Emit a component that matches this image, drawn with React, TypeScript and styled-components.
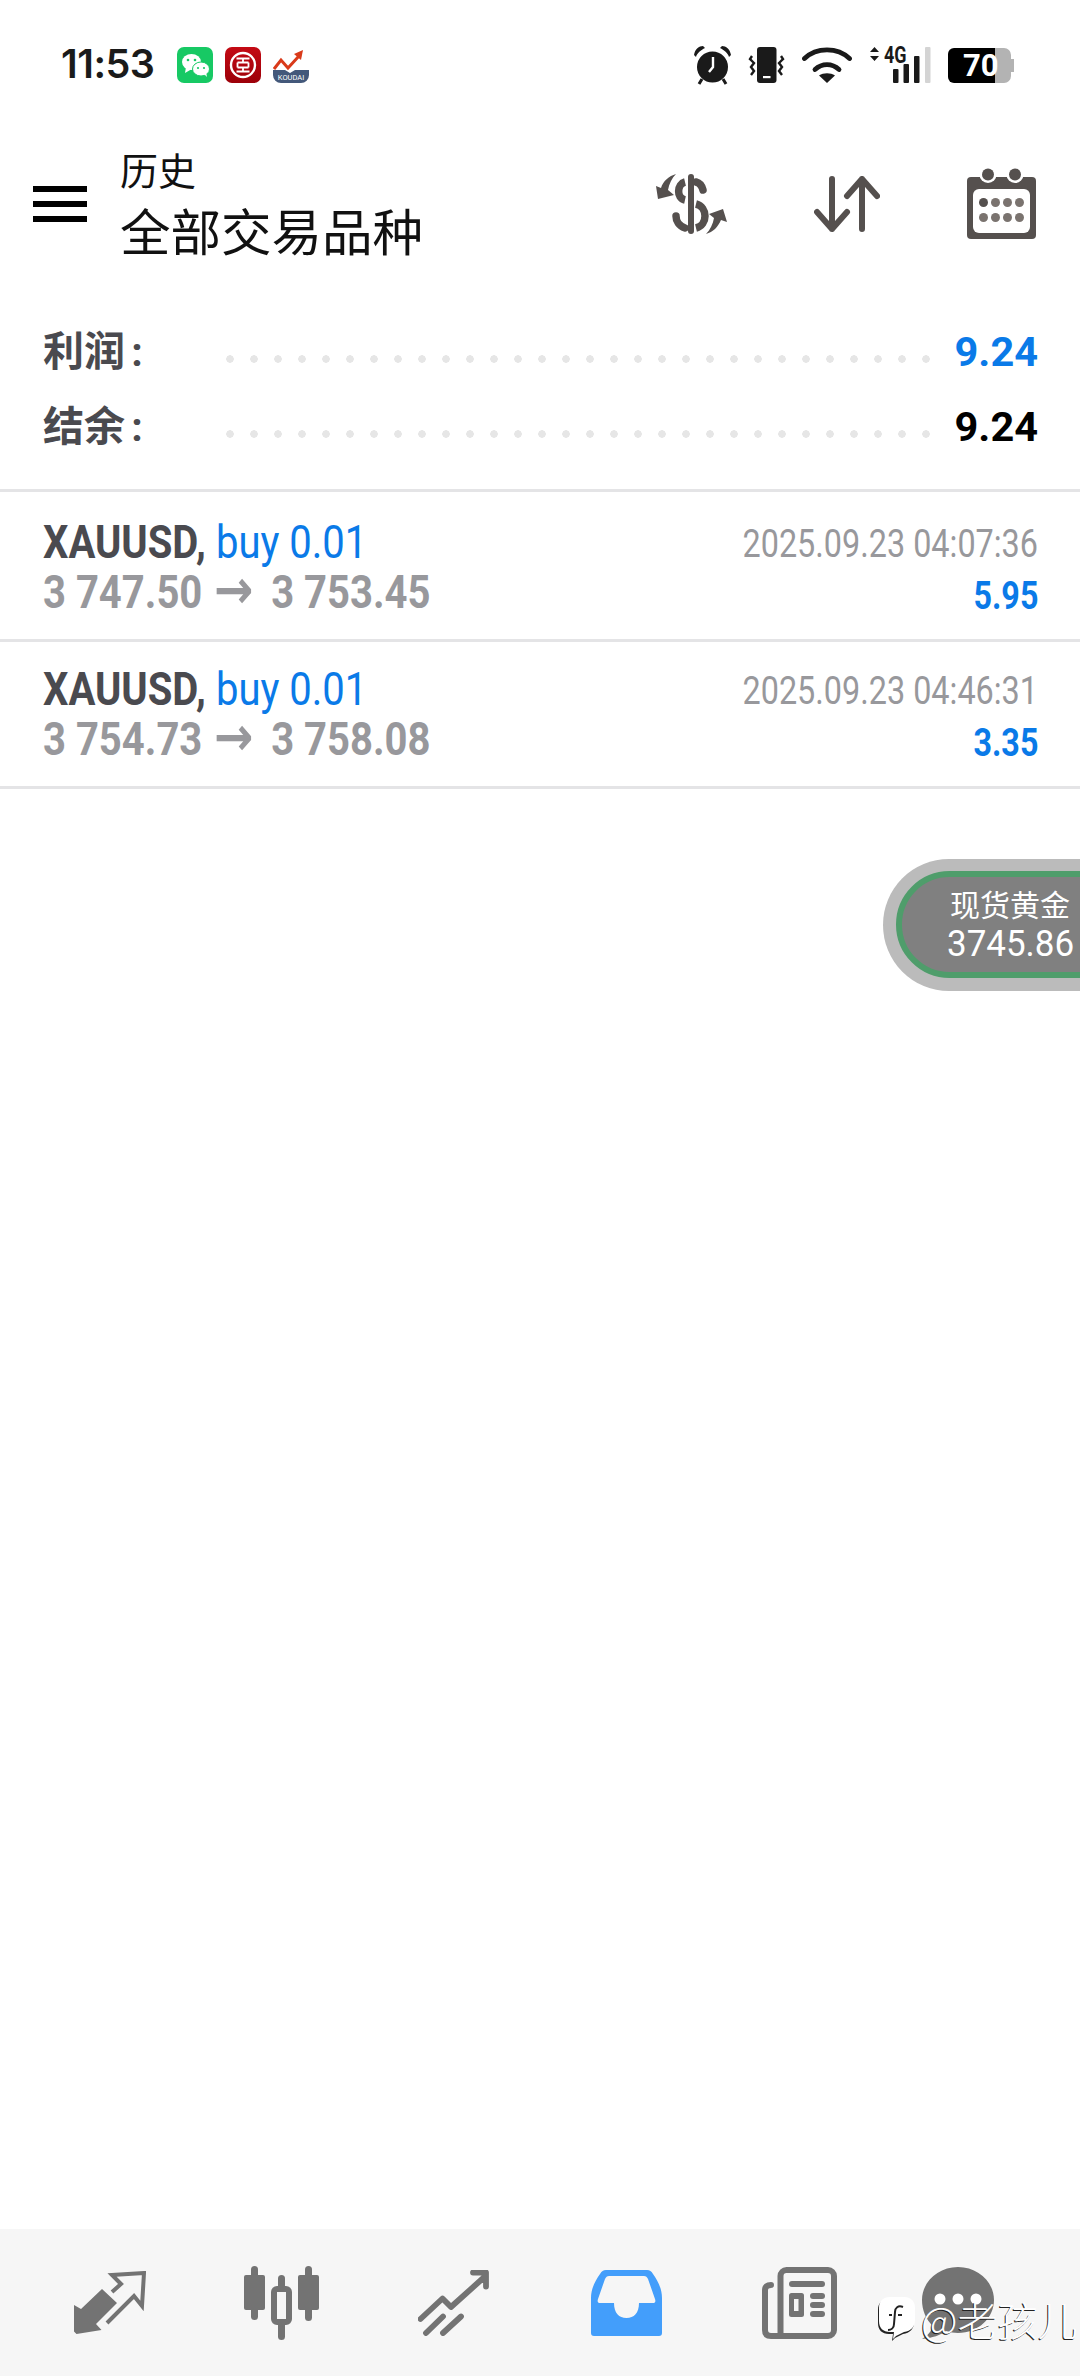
import React from "react";
import styled, { createGlobalStyle } from "styled-components";

const GlobalStyle = createGlobalStyle`
  html, body {
    margin: 0;
    padding: 0;
    background: #fff;
  }
  * {
    box-sizing: border-box;
  }
`;

const cjk = `"Noto Sans CJK SC", sans-serif`;
const blue = "#0a7ae8";
const grey = "#98989c";
const ink = "#4a4a4f";
const ink2 = "#55504e";
const tab = "#737373";
const dark = "#1a1a1a";

const Page = styled.div`
  width: 1080px;
  height: 2376px;
  display: flex;
  flex-direction: column;
  background: #fff;
  overflow: hidden;
  position: relative;
  font-family: Roboto, ${cjk};
`;

const StatusBar = styled.div`
  height: 127px;
  flex: none;
  display: flex;
  align-items: flex-start;
  padding: 47px 66px 0 61px;
`;

const Clock = styled.div`
  font: 600 39.5px/40px Inter, sans-serif;
  color: ${dark};
  width: 116px;
  margin-top: -3px;
  letter-spacing: -0.5px;
`;

const AppIcons = styled.div`
  display: flex;
  gap: 12px;
`;

const StatusIcons = styled.div`
  margin-left: auto;
  display: flex;
  align-items: flex-start;
  gap: 17px;
`;

const Header = styled.div`
  height: 161px;
  flex: none;
  display: flex;
  align-items: center;
  padding: 0 44px 0 33px;
`;

const MenuButton = styled.div`
  width: 54px;
  height: 36px;
  margin: 0 33px 7px 0;
  border-top: 6px solid #000;
  border-bottom: 6px solid #000;
  display: flex;
  align-items: center;
  &::before {
    content: "";
    display: block;
    width: 100%;
    height: 6px;
    background: #000;
  }
`;

const TitleBlock = styled.div`
  display: flex;
  flex-direction: column;
  color: #111;
  font-family: ${cjk};
  margin-bottom: 6px;
`;

const Subtitle = styled.div`
  font-size: 38px;
  line-height: 48px;
  font-weight: 400;
`;

const Title = styled.div`
  font-size: 50.5px;
  line-height: 72px;
  font-weight: 400;
`;

const HeaderActions = styled.div`
  margin: 0 0 8px auto;
  display: flex;
  align-items: center;
  gap: 87px;
`;

const Summary = styled.div`
  flex: none;
  height: 201px;
  padding: 26px 42px 0 43px;
  display: flex;
  flex-direction: column;
`;

const SummaryRow = styled.div`
  height: 75px;
  display: flex;
  align-items: center;
`;

const SummaryLabel = styled.div`
  width: 183px;
  font: 700 41px/48px Roboto, ${cjk};
  word-spacing: -4px;
  color: ${ink};
  flex: none;
`;

const Leader = styled.div`
  flex: 1;
  height: 8px;
  margin: 15px 11px 0 0;
  background-image: radial-gradient(circle at 4px 4px, #e6e6e6 3.5px, transparent 4px);
  background-size: 24px 8px;
`;

const SummaryValue = styled.div<{ $color: string }>`
  font: 700 41.5px/48px Roboto, sans-serif;
  color: ${(p) => p.$color};
`;

const Deal = styled.div<{ $first: boolean }>`
  flex: none;
  height: ${(p) => (p.$first ? 150 : 147)}px;
  border-top: 3px solid #e4e4e6;
  padding: ${(p) => (p.$first ? 25 : 22)}px 42px 0 43px;
  display: flex;
  justify-content: space-between;
`;

const Column = styled.div<{ $end?: boolean }>`
  display: flex;
  flex-direction: column;
  align-items: ${(p) => (p.$end ? "flex-end" : "flex-start")};
  margin-top: ${(p) => (p.$end ? "1px" : "0")};
`;

const Narrow = styled.div<{ $origin: string }>`
  transform: scaleX(0.87);
  transform-origin: ${(p) => p.$origin};
  white-space: pre;
`;

const Symbol = styled(Narrow)`
  font-size: 46px;
  line-height: 50px;
  font-weight: 700;
  color: ${ink};
`;

const Side = styled.span`
  font-weight: 400;
  color: ${blue};
`;

const Prices = styled(Narrow)`
  font-size: 46px;
  line-height: 50px;
  font-weight: 700;
  color: ${grey};
`;

const ArrowGlyph = styled.span`
  display: inline-block;
  font-family: "DejaVu Sans", sans-serif;
  font-size: 54px;
  line-height: 44px;
  height: 44px;
  padding: 0 9px 0 2px;
`;

const Stamp = styled(Narrow)`
  font-size: 39px;
  line-height: 52px;
  color: ${grey};
  transform: scaleX(0.83);
`;

const Profit = styled(Narrow)`
  font-size: 38px;
  line-height: 52px;
  font-weight: 700;
  color: ${blue};
  transform: scaleX(0.85);
`;

const LastLine = styled.div`
  border-top: 3px solid #e4e4e6;
`;

const Quote = styled.div`
  position: absolute;
  left: 883px;
  top: 859px;
  width: 260px;
  height: 132px;
  border-radius: 66px;
  background: #bbb;
  padding: 12px 0 0 13px;
`;

const QuoteInner = styled.div`
  width: 240px;
  height: 107px;
  border-radius: 54px;
  background: #808080;
  border: 6px solid #4f9d6b;
  color: #fff;
  font-family: Roboto, ${cjk};
  padding: 10px 0 0 45px;
`;

const QuoteName = styled.div`
  font-size: 30px;
  line-height: 38px;
  font-weight: 400;
  padding-left: 3px;
`;

const QuotePrice = styled.div`
  font-size: 37px;
  line-height: 38px;
  transform: scaleX(0.945);
  transform-origin: 0 50%;
`;

const Spacer = styled.div`
  flex: 1;
`;

const TabBar = styled.div`
  height: 147px;
  flex: none;
  background: #f6f6f6;
  display: flex;
  align-items: center;
  padding: 0 0 0 74px;
`;

const Tab = styled.div<{ $gap: number }>`
  display: flex;
  margin-right: ${(p) => p.$gap}px;
`;

const Watermark = styled.div`
  position: absolute;
  left: 877px;
  top: 2296px;
  display: flex;
  align-items: center;
  color: #fff;
  font: 300 40px/44px ${cjk};
  text-shadow: -1px 1px 0 #222;
  gap: 5px;
`;

const WatermarkMark = styled.svg`
  flex: none;
`;

const AlarmIcon = styled.svg`
  margin-top: -2px;
`;

function WeChat() {
  return (
    <svg width="36" height="36" viewBox="0 0 36 36">
      <rect width="36" height="36" rx="7" fill="#17c964" />
      <ellipse cx="14.500" cy="15" rx="9.500" ry="8" fill="#fff" />
      <path d="M9 20l-1 6 6-3.500z" fill="#fff" />
      <ellipse cx="24" cy="22" rx="8.500" ry="7" fill="#fff" stroke="#17c964" strokeWidth="1" />
      <path d="M27 27l3 3-1-5z" fill="#fff" />
      <circle cx="11" cy="13" r="1.300" fill="#17c964" />
      <circle cx="18" cy="13" r="1.300" fill="#17c964" />
      <circle cx="21" cy="21" r="1.100" fill="#17c964" />
      <circle cx="27" cy="21" r="1.100" fill="#17c964" />
    </svg>
  );
}

function Bank() {
  return (
    <svg width="36" height="36" viewBox="0 0 36 36">
      <defs>
        <linearGradient id="bankFill" x1="0" y1="0" x2="0" y2="1">
          <stop offset="0" stopColor="#c40a14" />
          <stop offset="1" stopColor="#9c0009" />
        </linearGradient>
      </defs>
      <rect width="36" height="36" rx="7" fill="url(#bankFill)" />
      <circle cx="18" cy="18" r="12" fill="none" stroke="#fff" strokeWidth="2.400" />
      <path d="M11.500 11.500h13M18 11.500v4M12.500 15.500h11M12.500 15.500v5M23.500 15.500v5M12.500 20.500h11M18 20.500v4M11.500 24.500h13" stroke="#fff" strokeWidth="1.800" fill="none" />
    </svg>
  );
}

function Koudai() {
  return (
    <svg width="36" height="36" viewBox="0 0 36 36">
      <path d="M0 23h12l5 3 5-3h14v5a8 8 0 0 1-8 8H8a8 8 0 0 1-8-8z" fill="#43587a" />
      <path d="M1 22l7-9 7 8L26 9" fill="none" stroke="#d93a1a" strokeWidth="3" />
      <path d="M21 7l9-4-2 10z" fill="#d93a1a" />
      <text x="18" y="33" fontSize="7.500" fill="#fff" textAnchor="middle" fontFamily="Roboto, sans-serif">KOUDAI</text>
    </svg>
  );
}

function Alarm() {
  return (
    <AlarmIcon width="37" height="40" viewBox="0 0 37 40">
      <circle cx="18.500" cy="22" r="15.500" fill={dark} />
      <path d="M0 10C1 4 5 1 9 1L11 3C7 5 3 8 2 12zM37 10C36 4 32 1 28 1L26 3C30 5 34 8 35 12z" fill={dark} />
      <path d="M8 34l-3 5M29 34l3 5" stroke={dark} strokeWidth="3" />
      <path d="M19 12v10l-4 5" fill="none" stroke="#fff" strokeWidth="2.400" />
    </AlarmIcon>
  );
}

function Vibrate() {
  return (
    <svg width="37" height="38" viewBox="0 0 37 38">
      <rect x="9" y="0" width="19.500" height="36" rx="3" fill={dark} />
      <rect x="15" y="29" width="7.500" height="2.200" fill="#fff" />
      <path d="M4 9l-2 3 4 4-3 4 3 4-3 4M33 9l2 3-4 4 3 4-3 4 3 4" fill="none" stroke={dark} strokeWidth="2.400" />
    </svg>
  );
}

function Wifi() {
  return (
    <svg width="50" height="37" viewBox="0 0 50 37">
      <path d="M2.500 11.500c12-11.500 33-11.500 45 0" fill="none" stroke={dark} strokeWidth="4.800" strokeLinecap="round" />
      <path d="M13 22.500c7-6.500 17-6.500 24 0" fill="none" stroke={dark} strokeWidth="4.800" strokeLinecap="round" />
      <path d="M25 36l-8-7.500c4.500-3 11.500-3 16 0z" fill={dark} />
    </svg>
  );
}

const SignalWrap = styled.div`
  position: relative;
  width: 62px;
  height: 37px;
`;

const SignalText = styled.span`
  position: absolute;
  left: 15px;
  top: -3px;
  font: 700 23px/24px Roboto, sans-serif;
  color: ${dark};
  transform: scaleX(0.78);
  transform-origin: 0 50%;
`;

function Signal() {
  return (
    <SignalWrap>
      <svg width="62" height="37" viewBox="0 0 62 37">
        <path d="M5.500 0l4.500 5H1zM5.500 14l4.500-5H1z" fill={dark} />
        <rect x="24" y="22" width="5.500" height="14" rx="1" fill={dark} />
        <rect x="34.500" y="17" width="5.500" height="19" rx="1" fill={dark} />
        <rect x="45" y="9" width="5.500" height="27" rx="1" fill={dark} />
        <rect x="56" y="0" width="5.500" height="36" rx="1" fill="#d4d4d4" />
      </svg>
      <SignalText>4G</SignalText>
    </SignalWrap>
  );
}

const BatteryBody = styled.div`
  position: relative;
  width: 66px;
  height: 35px;
  margin-top: 1px;
`;

const BatteryLabel = styled.span`
  position: absolute;
  left: 15px;
  top: 0;
  font: 700 31px/35px Roboto, sans-serif;
  color: #fff;
`;

function Battery() {
  return (
    <BatteryBody>
      <svg width="66" height="35" viewBox="0 0 66 35">
        <path d="M47 0h9a7 7 0 0 1 7 7v4h3v13h-3v4a7 7 0 0 1-7 7H47z" fill="#b3b3b3" />
        <path d="M6 0h41v35H6a6 6 0 0 1-6-6V6a6 6 0 0 1 6-6z" fill="#000" />
      </svg>
      <BatteryLabel>70</BatteryLabel>
    </BatteryBody>
  );
}

function DollarSwap() {
  return (
    <svg width="72" height="62" viewBox="0 0 72 62">
      <rect x="33" y="1" width="6" height="60" rx="3" fill={ink2} />
      <g fill="none" stroke={ink2} strokeWidth="7.500">
        <path d="M30 9C22 11 21 25 30 27" />
        <path d="M41 9C45 10 47 13 48 17" strokeLinecap="round" />
        <path d="M41 31C53 34 53 52 41 55" />
        <path d="M21 43C21 48 24 53 30 55" strokeLinecap="round" />
      </g>
      <path d="M21 1C14 3 8 8 6 15L1 13L3 26L19 22L13 17C14 11 17 5 21 1Z" fill={ink2} />
      <path d="M51 61C58 59 63 54 66 47L72 49L68 36L54 41L59 45C58 51 55 57 51 61Z" fill={ink2} />
    </svg>
  );
}

function SortArrows() {
  return (
    <svg width="66" height="56" viewBox="0 0 66 56">
      <path d="M18 3v50M3 36l15 17 15-17M48 53V3M33 20L48 3l15 17" fill="none" stroke={ink2} strokeWidth="6" strokeLinecap="round" strokeLinejoin="round" />
    </svg>
  );
}

function Calendar() {
  return (
    <svg width="69" height="71" viewBox="0 0 69 71">
      <path d="M4 9h61a4 4 0 0 1 4 4v54a4 4 0 0 1-4 4H4a4 4 0 0 1-4-4V13a4 4 0 0 1 4-4z" fill={ink2} />
      <circle cx="21" cy="6.500" r="8.500" fill="#fff" />
      <circle cx="48" cy="6.500" r="8.500" fill="#fff" />
      <circle cx="21" cy="6.500" r="6" fill={ink2} />
      <circle cx="48" cy="6.500" r="6" fill={ink2} />
      <rect x="6" y="21" width="57" height="44" rx="6" fill="#fff" />
      {[16.500, 28.500, 40.500, 52.500].map((x, i) => (
        <React.Fragment key={x}>
          <circle cx={x} cy="34.500" r="4.500" fill={i === 0 ? ink2 : "#7a736f"} />
          <circle cx={x} cy="49.500" r="4.500" fill="#7a736f" />
        </React.Fragment>
      ))}
    </svg>
  );
}

function TradeTab() {
  return (
    <svg width="72" height="64" viewBox="0 0 72 64">
      <path d="M0 34l7 4 21-20 15 14-21 21 5.500 6-25 4-2.500-2.500z" fill={tab} />
      <path d="M38 21l9-8-9-9 32-2-2 33-8-10-27 27" fill="none" stroke={tab} strokeWidth="4" />
    </svg>
  );
}

function CandleTab() {
  return (
    <svg width="75" height="74" viewBox="0 0 75 74">
      <g fill={tab}>
        <rect x="7" y="0" width="7" height="54" rx="3.500" />
        <rect x="0" y="9" width="21" height="35" rx="2" />
        <rect x="61" y="0" width="7" height="55" rx="3.500" />
        <rect x="54" y="9" width="21" height="35" rx="2" />
        <rect x="34" y="9" width="7" height="65" rx="3.500" />
      </g>
      <rect x="30" y="23" width="15" height="33" rx="3" fill="#f6f6f6" stroke={tab} strokeWidth="6" />
    </svg>
  );
}

function SignalTab() {
  return (
    <svg width="71" height="66" viewBox="0 0 71 66">
      <path d="M2.500 49l22-20.500 8.500 8.500 34.500-31M55 2.500h13v14" fill="none" stroke={tab} strokeWidth="5.800" strokeLinecap="round" strokeLinejoin="round" />
      <path d="M8 63l17-16.500M25 63l18-16.500" fill="none" stroke={tab} strokeWidth="5.800" strokeLinecap="round" />
    </svg>
  );
}

function InboxTab() {
  return (
    <svg width="71" height="66" viewBox="0 0 71 66">
      <path d="M15 0h41c3 0 4 1 6 4 5 7 9 15 9 24v35a3 3 0 0 1-3 3H3a3 3 0 0 1-3-3V28C0 19 4 11 9 4c2-3 3-4 6-4z" fill="#439efb" />
      <path d="M18 6h35c2 0 3 1 4 3l7 20c1 3 0 4-3 4H48c0 10-5 15-12.500 15S23 43 23 33H10c-3 0-4-1-3-4l7-20c1-2 2-3 4-3z" fill="#f6f6f6" />
    </svg>
  );
}

function NewsTab() {
  return (
    <svg width="75" height="72" viewBox="0 0 75 72">
      <path d="M18.500 66V9a6 6 0 0 1 6-6H66a6 6 0 0 1 6 6v54a6 6 0 0 1-6 6H9c-4 0-6-2-6-6V23c0-3 2-5 6-5" fill="none" stroke={tab} strokeWidth="6" strokeLinecap="round" />
      <rect x="27" y="14" width="36" height="6" rx="3" fill={tab} />
      <rect x="27" y="26" width="15" height="24" rx="2.500" fill={tab} />
      <rect x="32" y="32" width="4.500" height="12" fill="#f6f6f6" />
      <rect x="48" y="26" width="15" height="6" rx="3" fill={tab} />
      <rect x="48" y="35" width="15" height="6" rx="3" fill={tab} />
      <rect x="48" y="44" width="15" height="6" rx="3" fill={tab} />
    </svg>
  );
}

function ChatTab() {
  return (
    <svg width="72" height="72" viewBox="0 0 72 72">
      <path d="M36 0c20 0 36 15 36 33S56 66 36 66c-4 0-8-1-12-2-5 4-14 7-24 8 5-3 10-8 11-13C4 53 0 43 0 33 0 15 16 0 36 0z" fill={tab} />
      <circle cx="18" cy="32" r="5.500" fill="#fff" />
      <circle cx="36" cy="32" r="5.500" fill="#fff" />
      <circle cx="54" cy="32" r="5.500" fill="#fff" />
    </svg>
  );
}

export default function App() {
  const deals = [
    { open: "3 747.50", close: "3 753.45", stamp: "2025.09.23 04:07:36", profit: "5.95" },
    { open: "3 754.73", close: "3 758.08", stamp: "2025.09.23 04:46:31", profit: "3.35" },
  ];
  return (
    <Page>
      <GlobalStyle />
      <StatusBar>
        <Clock>11:53</Clock>
        <AppIcons>
          <WeChat />
          <Bank />
          <Koudai />
        </AppIcons>
        <StatusIcons>
          <Alarm />
          <Vibrate />
          <Wifi />
          <Signal />
          <Battery />
        </StatusIcons>
      </StatusBar>
      <Header>
        <MenuButton />
        <TitleBlock>
          <Subtitle>历史</Subtitle>
          <Title>全部交易品种</Title>
        </TitleBlock>
        <HeaderActions>
          <DollarSwap />
          <SortArrows />
          <Calendar />
        </HeaderActions>
      </Header>
      <Summary>
        <SummaryRow>
          <SummaryLabel>利润 :</SummaryLabel>
          <Leader />
          <SummaryValue $color={blue}>9.24</SummaryValue>
        </SummaryRow>
        <SummaryRow>
          <SummaryLabel>结余 :</SummaryLabel>
          <Leader />
          <SummaryValue $color="#000">9.24</SummaryValue>
        </SummaryRow>
      </Summary>
      {deals.map((d, i) => (
        <Deal key={d.stamp} $first={i === 0}>
          <Column>
            <Symbol $origin="0 50%">
              XAUUSD, <Side>buy 0.01</Side>
            </Symbol>
            <Prices $origin="0 50%">
              {d.open} <ArrowGlyph>→</ArrowGlyph> {d.close}
            </Prices>
          </Column>
          <Column $end>
            <Stamp $origin="100% 50%">{d.stamp}</Stamp>
            <Profit $origin="100% 50%">{d.profit}</Profit>
          </Column>
        </Deal>
      ))}
      <LastLine />
      <Spacer />
      <Quote>
        <QuoteInner>
          <QuoteName>现货黄金</QuoteName>
          <QuotePrice>3745.86</QuotePrice>
        </QuoteInner>
      </Quote>
      <TabBar>
        <Tab $gap={98}><TradeTab /></Tab>
        <Tab $gap={99}><CandleTab /></Tab>
        <Tab $gap={102}><SignalTab /></Tab>
        <Tab $gap={100}><InboxTab /></Tab>
        <Tab $gap={85}><NewsTab /></Tab>
        <Tab $gap={0}><ChatTab /></Tab>
      </TabBar>
      <Watermark>
        <WatermarkMark width="39" height="46" viewBox="-1 0 39 46">
          <path d="M11 3h14c7 0 11 4 11 11v12c0 7-4 11-11 12l-8 4-3 3 1-7h-4C4 38 0 34 0 27V14C0 7 4 3 11 3z" fill="#222" />
          <path d="M12 1h14c7 0 11 4 11 11v12c0 7-4 11-11 12l-8 4-3 3 1-7h-4C5 36 1 32 1 25V12C1 5 5 1 12 1z" fill="#fff" />
          <path d="M25 11c-5-2-8 1-8 5l-1 12c0 4-3 6-6 6M11 19h3M20 19h4" fill="none" stroke="#222" strokeWidth="2" />
        </WatermarkMark>
        @老孩儿
      </Watermark>
    </Page>
  );
}
